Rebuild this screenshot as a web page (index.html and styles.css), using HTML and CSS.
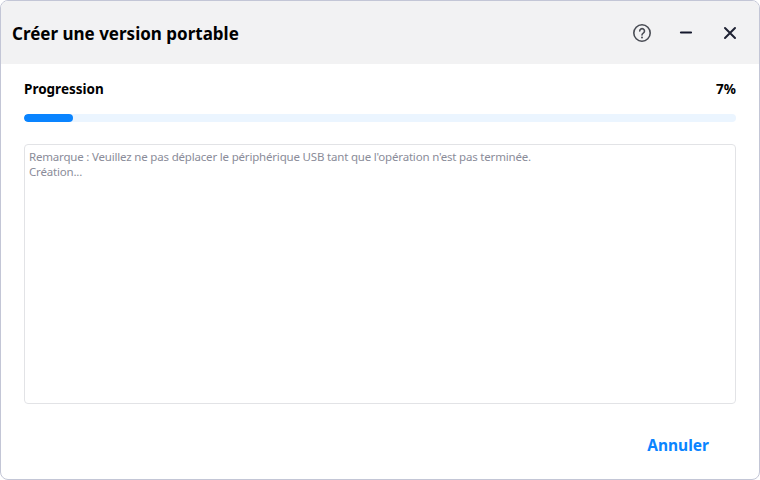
FILE: index.html
```html
<!DOCTYPE html>
<html lang="fr">
<head>
<meta charset="utf-8">
<title>Créer une version portable</title>
<link rel="stylesheet" href="styles.css">
</head>
<body>
<div class="window">
  <header class="titlebar">
    <h1 class="title">Créer une version portable</h1>
    <div class="controls">
      <svg class="icon" viewBox="0 0 20 20" width="20" height="20" fill="none" stroke="#4a4d55" stroke-width="1.6"><circle cx="10" cy="10" r="8.2"/><path d="M7.7 8a2.4 2.4 0 1 1 3.6 2.1c-.9.6-1.3 1-1.3 1.9" stroke-linecap="round"/><circle cx="10" cy="14.4" r="1" fill="#4a4d55" stroke="none"/></svg>
      <svg class="icon" viewBox="0 0 20 20" width="20" height="20" fill="none" stroke="#14182c" stroke-width="2.2" stroke-linecap="round"><path d="M5 9.5h10"/></svg>
      <svg class="icon" viewBox="0 0 20 20" width="20" height="20" fill="none" stroke="#1f2233" stroke-width="2" stroke-linecap="round"><path d="M5 5l10 10M15 5L5 15"/></svg>
    </div>
  </header>
  <main class="content">
    <div class="progress-head">
      <span>Progression</span>
      <span>7%</span>
    </div>
    <div class="track"><div class="fill" style="width:6.9%"></div></div>
    <div class="log">
      <div>Remarque : Veuillez ne pas déplacer le périphérique USB tant que l'opération n'est pas terminée.</div>
      <div>Création...</div>
    </div>
    <div class="footer"><span class="cancel">Annuler</span></div>
  </main>
</div>
</body>
</html>
```
FILE: styles.css
```css
* { box-sizing: border-box; }
html, body { margin: 0; height: 100%; background: #fff; }
body { font-family: "Noto Sans", "Open Sans", sans-serif; }
.window {
  width: 760px;
  height: 480px;
  display: flex;
  flex-direction: column;
  border: 1px solid #c3c6d6;
  border-radius: 8px;
  overflow: hidden;
  background: #fff;
}
.titlebar {
  height: 63px;
  flex: none;
  background: #f2f2f3;
  display: flex;
  align-items: center;
  justify-content: space-between;
  padding: 0 19px 0 11px;
}
.title { margin: 2px 0 0; font-size: 17px; font-weight: 700; color: #000; }
.controls { display: flex; gap: 24px; }
.icon { display: block; }
.content {
  flex: 1;
  display: flex;
  flex-direction: column;
  padding: 0 23px;
  min-height: 0;
}
.progress-head {
  display: flex;
  justify-content: space-between;
  margin-top: 15px;
  height: 20px;
  line-height: 20px;
  font-size: 13.5px;
  font-weight: 700;
  color: #000;
}
.track {
  margin-top: 15px;
  height: 8px;
  border-radius: 4px;
  background: #ebf5ff;
  overflow: hidden;
}
.fill { height: 100%; border-radius: 4px; background: #0a84ff; }
.log {
  margin-top: 22px;
  height: 260px;
  padding: 4px 4px;
  border: 1px solid #e2e3e6;
  border-radius: 4px;
  font-size: 11.5px;
  line-height: 15px;
  letter-spacing: -0.185px;
  color: #8a8c99;
}
.footer { flex: 1; display: flex; align-items: center; justify-content: flex-end; padding: 7px 27px 0 0; }
.cancel { font-size: 15.5px; font-weight: 700; color: #0a84ff; }
```
